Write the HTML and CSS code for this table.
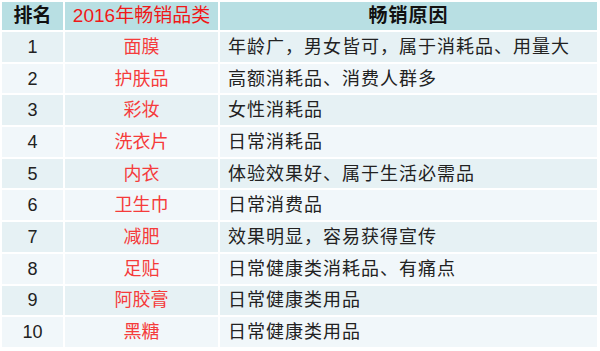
FILE: index.html
```
<!DOCTYPE html>
<html lang="zh-CN">
<head>
    <meta charset="UTF-8">
    <meta name="viewport" content="width=device-width, initial-scale=1.0">
    <title>2016年畅销品类</title>
    <link rel="stylesheet" href="styles.css">
</head>
<body>
    <table class="rankTable">
        <tr class="headRow">
            <th class="rank">排名</th>
            <th class="product">2016年畅销品类</th>
            <th class="reason">畅销原因</th>
        </tr>
        <tr><td class="rank">1</td><td class="product">面膜</td><td class="reason">年龄广，男女皆可，属于消耗品、用量大</td></tr>
        <tr><td class="rank">2</td><td class="product">护肤品</td><td class="reason">高额消耗品、消费人群多</td></tr>
        <tr><td class="rank">3</td><td class="product">彩妆</td><td class="reason">女性消耗品</td></tr>
        <tr><td class="rank">4</td><td class="product">洗衣片</td><td class="reason">日常消耗品</td></tr>
        <tr><td class="rank">5</td><td class="product">内衣</td><td class="reason">体验效果好、属于生活必需品</td></tr>
        <tr><td class="rank">6</td><td class="product">卫生巾</td><td class="reason">日常消费品</td></tr>
        <tr><td class="rank">7</td><td class="product">减肥</td><td class="reason">效果明显，容易获得宣传</td></tr>
        <tr><td class="rank">8</td><td class="product">足贴</td><td class="reason">日常健康类消耗品、有痛点</td></tr>
        <tr><td class="rank">9</td><td class="product">阿胶膏</td><td class="reason">日常健康类用品</td></tr>
        <tr><td class="rank">10</td><td class="product">黑糖</td><td class="reason">日常健康类用品</td></tr>
    </table>
</body>
</html>
```
FILE: styles.css
```
html, body {
    margin: 0;
    background-color: #fff;
    color: #222;
    font-family: "Liberation Sans", "Noto Sans CJK SC", sans-serif;
}

.rankTable {
    border-collapse: separate;
    border-spacing: 2px;
    width: 599px;
    table-layout: fixed;
}

.rankTable td, .rankTable th {
    padding: 0;
    height: 29.7px;
    font-size: 18px;
    font-weight: normal;
    line-height: 20px;
    white-space: nowrap;
}

.rankTable tr:nth-child(even) td { background-color: #e6f1f4; }
.rankTable tr:nth-child(odd) td { background-color: #f1f7fa; }

.headRow th {
    background-color: #b8dfe3;
    height: 28px;
    font-size: 19px;
}

.rank {
    width: 61px;
    text-align: center;
}
.headRow .rank {
    font-weight: bold;
    color: #111;
}

.product {
    width: 153px;
    text-align: center;
    color: #f53b3b;
}
.headRow .product {
    color: #f01818;
}

.reason {
    text-align: left;
    padding-left: 8px !important;
    letter-spacing: 1px;
}
.headRow .reason {
    text-align: center;
    font-weight: bold;
    color: #111;
    padding-left: 0 !important;
}
```
